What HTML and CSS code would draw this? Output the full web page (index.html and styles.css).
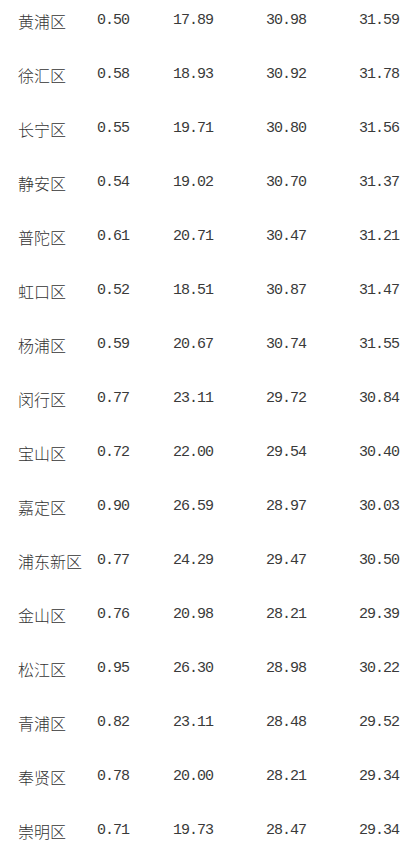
FILE: index.html
```html
<!DOCTYPE html>
<html lang="zh-CN">
<head>
<meta charset="utf-8">
<link rel="stylesheet" href="styles.css">
</head>
<body>
<div class="table">
  <div class="row"><span class="name">黄浦区</span><span class="num">0.50</span><span class="num">17.89</span><span class="num">30.98</span><span class="num">31.59</span></div>
  <div class="row"><span class="name">徐汇区</span><span class="num">0.58</span><span class="num">18.93</span><span class="num">30.92</span><span class="num">31.78</span></div>
  <div class="row"><span class="name">长宁区</span><span class="num">0.55</span><span class="num">19.71</span><span class="num">30.80</span><span class="num">31.56</span></div>
  <div class="row"><span class="name">静安区</span><span class="num">0.54</span><span class="num">19.02</span><span class="num">30.70</span><span class="num">31.37</span></div>
  <div class="row"><span class="name">普陀区</span><span class="num">0.61</span><span class="num">20.71</span><span class="num">30.47</span><span class="num">31.21</span></div>
  <div class="row"><span class="name">虹口区</span><span class="num">0.52</span><span class="num">18.51</span><span class="num">30.87</span><span class="num">31.47</span></div>
  <div class="row"><span class="name">杨浦区</span><span class="num">0.59</span><span class="num">20.67</span><span class="num">30.74</span><span class="num">31.55</span></div>
  <div class="row"><span class="name">闵行区</span><span class="num">0.77</span><span class="num">23.11</span><span class="num">29.72</span><span class="num">30.84</span></div>
  <div class="row"><span class="name">宝山区</span><span class="num">0.72</span><span class="num">22.00</span><span class="num">29.54</span><span class="num">30.40</span></div>
  <div class="row"><span class="name">嘉定区</span><span class="num">0.90</span><span class="num">26.59</span><span class="num">28.97</span><span class="num">30.03</span></div>
  <div class="row"><span class="name">浦东新区</span><span class="num">0.77</span><span class="num">24.29</span><span class="num">29.47</span><span class="num">30.50</span></div>
  <div class="row"><span class="name">金山区</span><span class="num">0.76</span><span class="num">20.98</span><span class="num">28.21</span><span class="num">29.39</span></div>
  <div class="row"><span class="name">松江区</span><span class="num">0.95</span><span class="num">26.30</span><span class="num">28.98</span><span class="num">30.22</span></div>
  <div class="row"><span class="name">青浦区</span><span class="num">0.82</span><span class="num">23.11</span><span class="num">28.48</span><span class="num">29.52</span></div>
  <div class="row"><span class="name">奉贤区</span><span class="num">0.78</span><span class="num">20.00</span><span class="num">28.21</span><span class="num">29.34</span></div>
  <div class="row"><span class="name">崇明区</span><span class="num">0.71</span><span class="num">19.73</span><span class="num">28.47</span><span class="num">29.34</span></div>
</div>
</body>
</html>
```
FILE: styles.css
```css
html, body {
  margin: 0;
  padding: 0;
  background: #ffffff;
}
.table {
  width: 414px;
  color: #333333;
}
.row {
  display: grid;
  grid-template-columns: 79px 76px 93px 93px 55px;
  padding-left: 18px;
  padding-top: 10px;
  height: 54px;
  box-sizing: border-box;
  line-height: 22px;
}
.name {
  font-family: "Noto Sans CJK SC", sans-serif;
  font-size: 16px;
  font-weight: 300;
  white-space: nowrap;
}
.num {
  font-family: "Liberation Mono", monospace;
  font-size: 15px;
  letter-spacing: -1px;
  color: #3a3a3a;
  white-space: nowrap;
}
```
